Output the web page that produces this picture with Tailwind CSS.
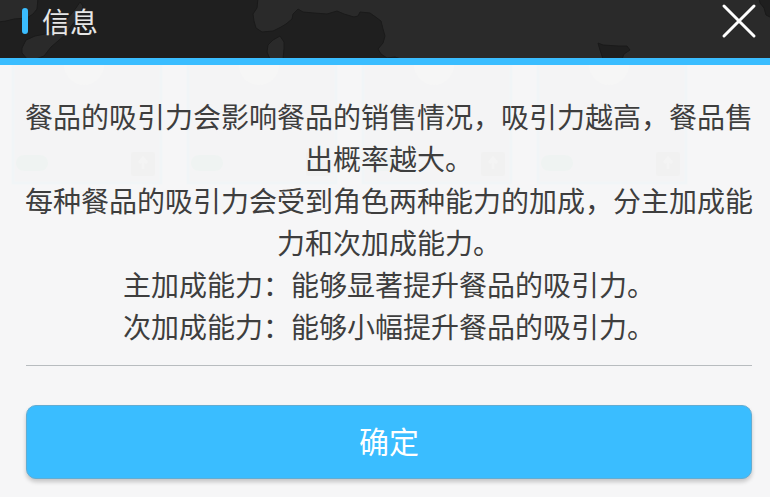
<!DOCTYPE html>
<html lang="zh-CN">
<head>
    <meta charset="UTF-8">
    <meta name="viewport" content="width=device-width, initial-scale=1.0">
    <title>信息</title>
    <script src="https://cdn.jsdelivr.net/npm/@tailwindcss/browser@4"></script>
</head>
<body class="min-h-screen bg-[#f6f6f7] font-['Noto_Sans_CJK_SC',sans-serif] text-[#3e3e3e]">
    <div role="dialog" aria-labelledby="title" class="relative flex min-h-screen flex-col overflow-hidden">
        <header class="relative overflow-hidden border-b-7 border-[#3abdff] bg-[#1f1f1f]">
            <!-- Map silhouette -->
            <svg class="absolute top-0 left-0 h-[58px] w-[770px]" viewBox="0 0 770 58" fill="#2a2a2a" stroke="#1a1a1a" stroke-width="1" aria-hidden="true">
                <path d="M-2 -2H38L37 9L33 14L27 18L14 19L6 21L-2 22Z" />
                <path d="M80 2L83 6L81 14L72 25L66 34L58 41L51 47L44 56L36 59H27L22 53V48L26 40L35 36L45 34L58 27L68 18L76 8Z" />
                <path d="M258 -2L257 8L253 14L254 21L256 28L262 32L273 31L281 27L286 24L292 19L293 14L298 9L303 12L314 13L327 14L337 11L344 14L354 17L358 16L360 12L370 13L377 18L381 21L383 29L385 36L383 43L378 49L381 54L387 58L395 57L401 59H603L600 50L598 43L603 45L618 46L627 46L630 50L624 54L622 59H772V18L766 15L764 8L760 3L759 -2Z" />
                <path d="M280 36L284 42V49L283 59H270L267 52L268 45L273 40Z" />
            </svg>
            <div class="relative flex h-[58px] items-start justify-between pl-[22px] pr-3">
                <div class="flex h-[42px] items-center">
                    <span class="mr-[14px] h-[26px] w-[6px] rounded-full bg-[#3abdff]"></span>
                    <h1 id="title" class="text-[28px] leading-[42px] text-[#e6e6e6]">信息</h1>
                </div>
                <button type="button" aria-label="关闭" class="flex h-[42px] items-center text-white">
                    <svg class="h-[38px] w-[38px]" viewBox="0 0 38 38" fill="none" stroke="currentColor" stroke-width="3" stroke-linecap="round" aria-hidden="true">
                        <path d="M4 4L34 34M34 4L4 34" />
                    </svg>
                </button>
            </div>
        </header>

        <main class="relative flex-1">
            <!-- Cards showing faintly through the panel -->
            <svg class="absolute top-0 left-0 h-[160px] w-[770px]" viewBox="0 0 770 160" aria-hidden="true">
                <g id="ghost">
                    <rect x="13" width="148" height="118" fill="#f4f4f5" />
                    <path d="M13 0V118H161V0" fill="none" stroke="#f1f5f7" stroke-width="3" />
                    <circle cx="84" cy="0" r="20" fill="#f6f6f6" />
                    <rect x="16" y="90" width="32" height="16" rx="8" fill="#eff3f2" />
                    <rect x="131" y="87" width="24" height="24" rx="2" fill="#f1f1f1" />
                    <path d="M143 104V94M139 98L143 93L147 98" fill="none" stroke="#f4f4f4" stroke-width="3" />
                </g>
                <use href="#ghost" x="175" />
                <use href="#ghost" x="350" />
                <use href="#ghost" x="525" />
            </svg>

            <div class="relative pt-[30px] pr-[17px] pl-[25px] text-center text-[28px] leading-[42px]">
                <p>餐品的吸引力会影响餐品的销售情况，吸引力越高，餐品售出概率越大。</p>
                <p>每种餐品的吸引力会受到角色两种能力的加成，分主加成能力和次加成能力。</p>
                <p>主加成能力：能够显著提升餐品的吸引力。</p>
                <p>次加成能力：能够小幅提升餐品的吸引力。</p>
            </div>

            <div class="relative mt-[18px] pr-[18px] pb-[18px] pl-[26px]">
                <hr class="border-[#b8bcbf]">
                <button type="button" class="mt-[39px] h-[74px] w-full rounded-[10px] border border-[#62add3] bg-[#3abdff] pb-1 text-[30px] text-white shadow-[0_3px_4px_rgba(0,0,0,0.2)]">确定</button>
            </div>
        </main>
    </div>
</body>
</html>
